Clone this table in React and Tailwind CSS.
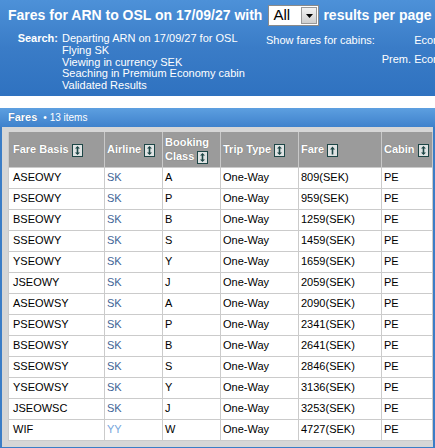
import React from "react";

const fares = [
  ["ASEOWY", "SK", "A", "809"],
  ["PSEOWY", "SK", "P", "959"],
  ["BSEOWY", "SK", "B", "1259"],
  ["SSEOWY", "SK", "S", "1459"],
  ["YSEOWY", "SK", "Y", "1659"],
  ["JSEOWY", "SK", "J", "2059"],
  ["ASEOWSY", "SK", "A", "2090"],
  ["PSEOWSY", "SK", "P", "2341"],
  ["BSEOWSY", "SK", "B", "2641"],
  ["SSEOWSY", "SK", "S", "2846"],
  ["YSEOWSY", "SK", "Y", "3136"],
  ["JSEOWSC", "SK", "J", "3253"],
  ["WIF", "YY", "W", "4727"],
];

function SortIcon({ up }) {
  return (
    <svg width="11" height="13" viewBox="0 0 11 13" className="inline-block align-middle ml-[3px]">
      <rect x="0.5" y="0.5" width="10" height="12" fill="#dfe3e3" stroke="#1d4646" />
      {up ? (
        <path d="M5.5 2.5 L8 5.5 H6.3 V10.5 H4.7 V5.5 H3 Z" fill="#1d4646" />
      ) : (
        <path d="M5.5 2 L8 4.5 H6.3 V8.5 H8 L5.5 11 L3 8.5 H4.7 V4.5 H3 Z" fill="#1d4646" />
      )}
    </svg>
  );
}

function Th({ children, up, first }) {
  return (
    <th
      className={
        "border-x border-[#c9c9c9] bg-[#9b9b9b] text-left font-bold text-white pr-0 text-[11px] leading-[14px] whitespace-nowrap [text-shadow:0_0_1px_#666] " +
        (first ? "pl-[4px]" : "pl-[2px]")
      }
    >
      {children}
      <SortIcon up={up} />
    </th>
  );
}

export default function App() {
  return (
    <div className="w-[435px] h-[448px] overflow-hidden bg-white font-['Liberation_Sans',Arial,sans-serif]">
      <div className="h-[96px] bg-gradient-to-b from-[#4d91d8] via-[#3a7cc7] to-[#2f72c0] px-[8px] pt-[5px] text-white">
        <div className="flex items-center h-[21px] whitespace-nowrap text-[14px] font-bold">
          <span className="shrink-0">Fares for ARN to OSL on 17/09/27 with</span>
          <div className="shrink-0 ml-[6px] flex items-center h-[21px] w-[51px] bg-white border border-[#8a8a8a]">
            <span className="flex-1 pl-[4px] text-black font-normal text-[15px]">All</span>
            <div className="w-[16px] h-[17px] mr-[1px] bg-gradient-to-b from-[#f2f2f2] to-[#cfcfcf] border border-[#9a9a9a] flex items-center justify-center">
              <svg width="7" height="4" viewBox="0 0 7 4">
                <path d="M0 0 H7 L3.5 4 Z" fill="#000" />
              </svg>
            </div>
          </div>
          <span className="shrink-0 ml-[4px]">results per page</span>
        </div>
        <div className="flex mt-[7px] text-[11px] leading-[11.75px] whitespace-nowrap">
          <div className="shrink-0 w-[50px] text-right font-bold">Search:</div>
          <div className="shrink-0 w-[208px] pl-[4px]">
            <div>Departing ARN on 17/09/27 for OSL</div>
            <div>Flying SK</div>
            <div>Viewing in currency SEK</div>
            <div>Seaching in Premium Economy cabin</div>
            <div>Validated Results</div>
          </div>
          <div className="shrink-0 grid grid-cols-[108px_86px] pt-[2px] auto-rows-[19px]">
            <div>Show fares for cabins:</div>
            <div className="text-right">Economy</div>
            <div></div>
            <div className="text-right">Prem. Economy</div>
          </div>
        </div>
      </div>

      <div className="mt-[12px] border-x-2 border-b-2 border-[#3b7dc6] bg-[#d6d6d6]">
        <div className="h-[19px] -mx-[2px] px-[8px] flex items-center gap-[6px] bg-gradient-to-b from-[#5d9fe0] to-[#3f82cc] text-white">
          <span className="text-[11px] font-bold [text-shadow:0_0_1px_#2a5f9a]">Fares</span>
          <span className="text-[10px]">• 13 items</span>
        </div>
        <div className="pt-[5px] pl-[6px] pb-[6px]">
          <table className="table-fixed border-collapse w-[424px] text-[11px] text-black">
            <colgroup>
              <col className="w-[96px]" />
              <col className="w-[58px]" />
              <col className="w-[58px]" />
              <col className="w-[78px]" />
              <col className="w-[83px]" />
              <col className="w-[51px]" />
            </colgroup>
            <thead>
              <tr className="h-[35px]">
                <Th first>Fare Basis</Th>
                <Th>Airline</Th>
                <Th>
                  Booking
                  <br />
                  Class
                </Th>
                <Th>Trip Type</Th>
                <Th up>Fare</Th>
                <Th>Cabin</Th>
              </tr>
            </thead>
            <tbody>
              {fares.map(([basis, airline, cls, fare]) => (
                <tr key={basis} className="h-[21px] bg-white">
                  <td className="border border-[#cbcbcb] px-[4px]">{basis}</td>
                  <td
                    className={
                      "border border-[#cbcbcb] px-[2px] " +
                      (airline === "YY" ? "text-[#77a6dc]" : "text-[#3f6597]")
                    }
                  >
                    {airline}
                  </td>
                  <td className="border border-[#cbcbcb] px-[2px]">{cls}</td>
                  <td className="border border-[#cbcbcb] px-[2px]">One-Way</td>
                  <td className="border border-[#cbcbcb] px-[2px]">{fare}(SEK)</td>
                  <td className="border border-[#cbcbcb] px-[2px]">PE</td>
                </tr>
              ))}
            </tbody>
          </table>
        </div>
      </div>
    </div>
  );
}
